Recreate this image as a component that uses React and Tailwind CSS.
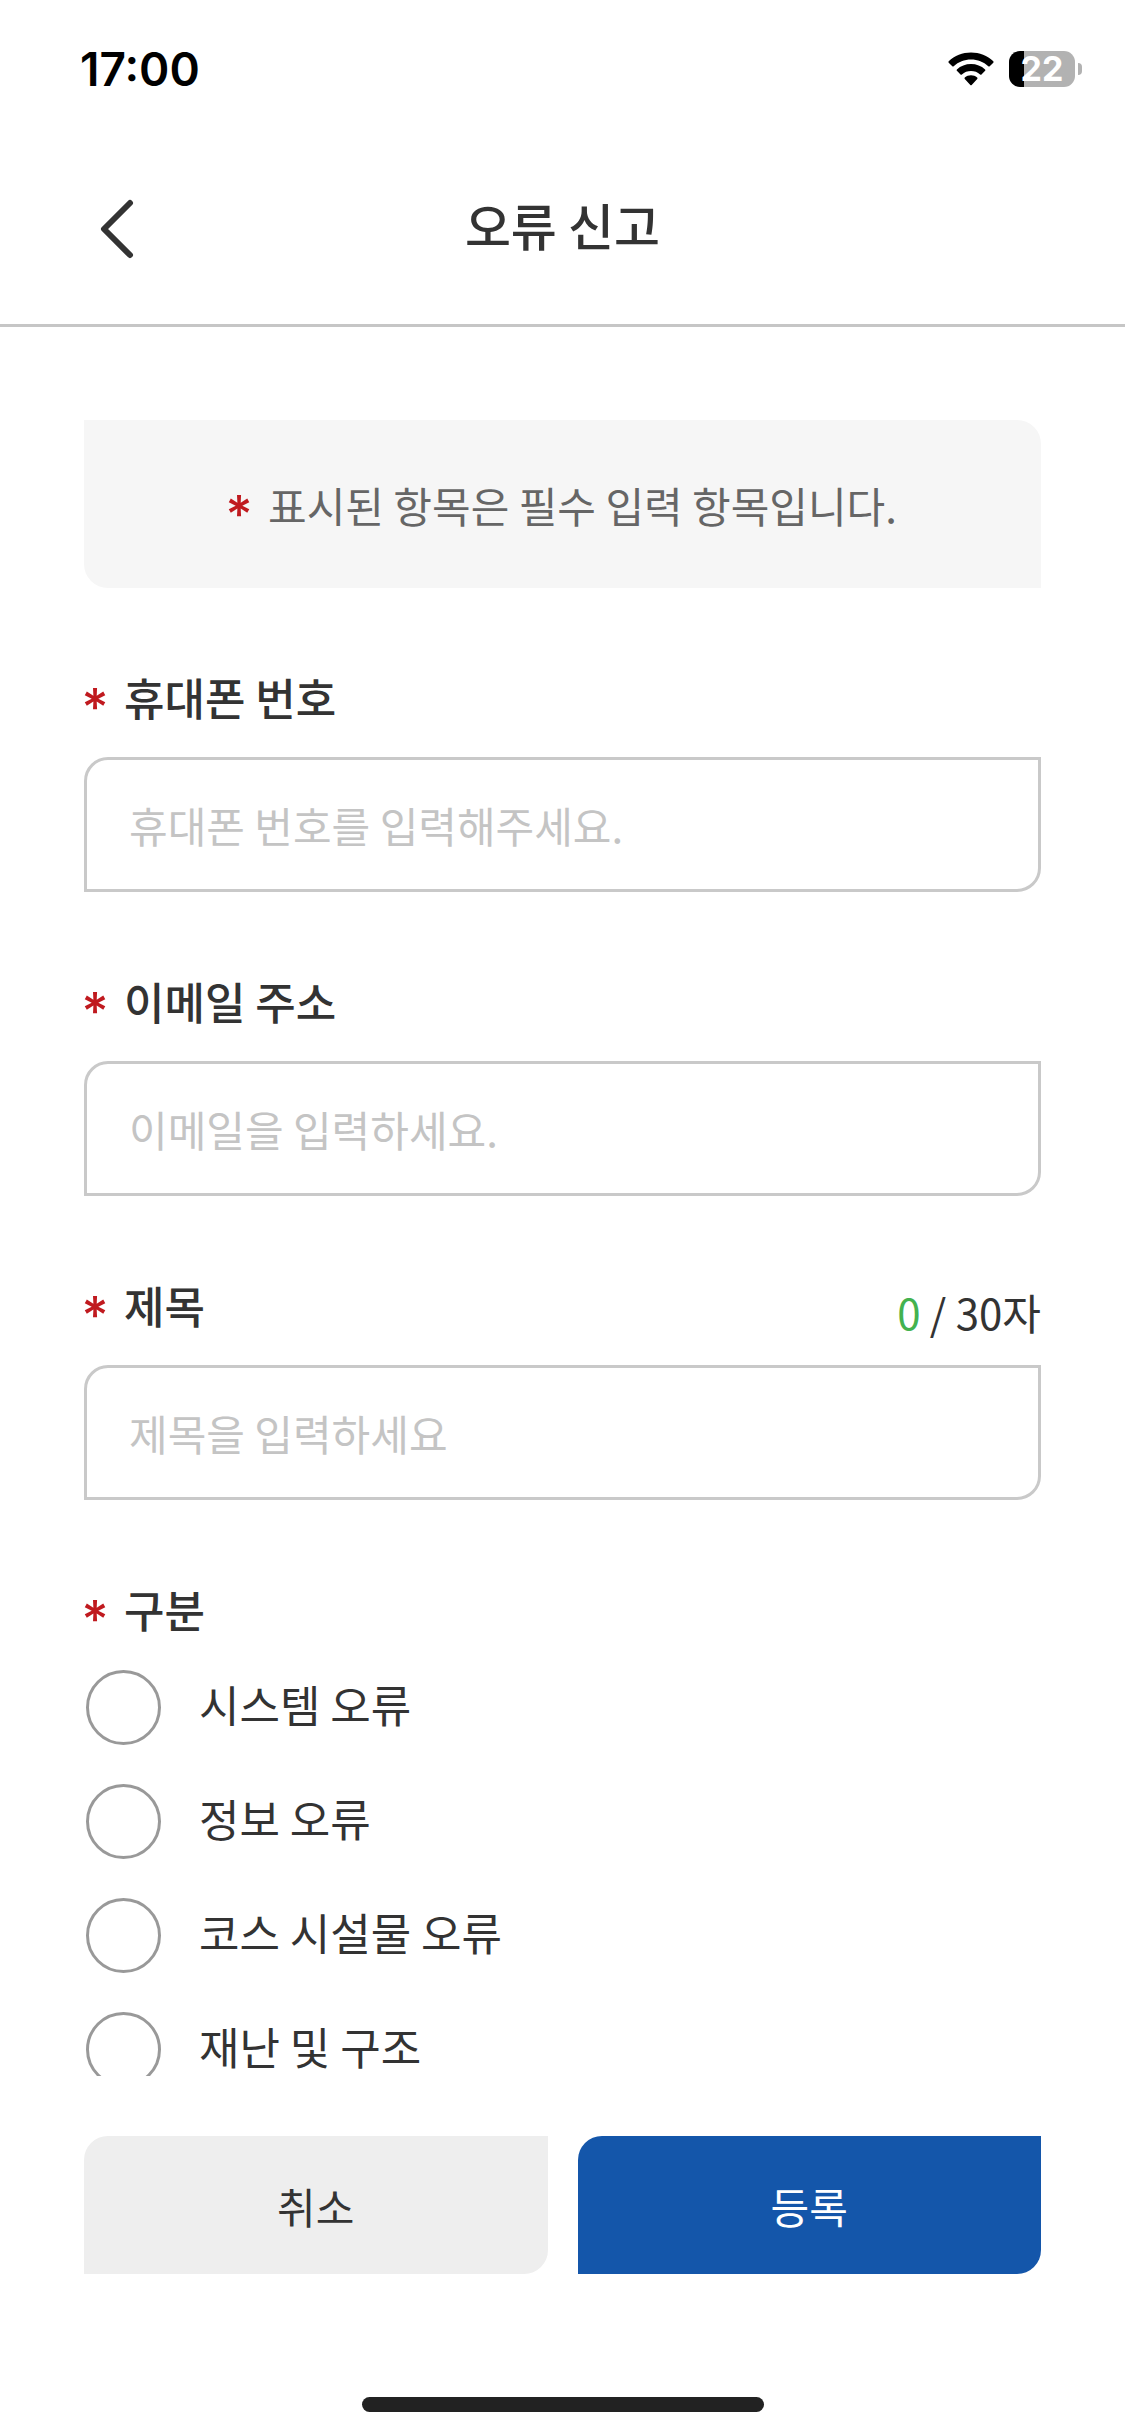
import React, { useState } from 'react'

const categories = [
  { id: 'system', label: '시스템 오류' },
  { id: 'info', label: '정보 오류' },
  { id: 'facility', label: '코스 시설물 오류' },
  { id: 'rescue', label: '재난 및 구조' },
]

const StatusBar = () => (
  <div className="flex items-center justify-between h-[138px] pl-[80px] pr-[43px] font-['Inter',sans-serif]">
    <span className="text-[46px] leading-none font-semibold text-black">17:00</span>
    <div className="flex items-center gap-[15px]">
      <svg width="46" height="34" viewBox="0 0 46 34" aria-hidden="true">
        <path d="M23 0.5C14.5 0.5 6.600 3.600 0.700 9.300Q0.100 10 0.700 10.700L4.300 14.300Q5 14.900 5.700 14.300C10.400 10 16.500 7.600 23 7.600S35.600 10 40.300 14.300Q41 14.900 41.700 14.300L45.300 10.700Q45.900 10 45.300 9.300C39.400 3.600 31.500 0.500 23 0.500Z" />
        <path d="M23 12C17.600 12 12.700 14 8.900 17.400Q8.200 18.100 8.900 18.800L12.500 22.400Q13.200 23 13.900 22.400C16.400 20.200 19.600 19 23 19S29.600 20.200 32.100 22.400Q32.800 23 33.500 22.400L37.100 18.800Q37.800 18.100 37.100 17.400C33.300 14 28.400 12 23 12Z" />
        <path d="M23 23.300C20.700 23.300 18.500 24.100 16.800 25.500Q16.100 26.200 16.800 26.900L22.300 32.900Q23 33.500 23.700 32.900L29.200 26.900Q29.900 26.200 29.200 25.500C27.500 24.100 25.300 23.300 23 23.300Z" />
      </svg>
      <div className="flex items-center gap-[3px]">
        <div className="flex items-center justify-center w-[66px] h-[36px] rounded-[11px] bg-linear-to-r from-black from-23% to-[#b2b2b2] to-23%">
          <span className="text-[34px] leading-none font-bold text-white">22</span>
        </div>
        <div className="w-[4px] h-[12px] rounded-r-full bg-[#b2b2b2]" />
      </div>
    </div>
  </div>
)

const Required = () => (
  <span className="flex justify-center w-[22px] h-[34px] shrink-0 text-[52px] leading-[56px] font-medium text-[#c01a1f] font-['Inter',sans-serif]">
    *
  </span>
)

const Field = ({ id, label, type = 'text', placeholder, value, onChange, maxLength }) => (
  <div className="flex flex-col gap-[32px]">
    <div className="flex items-end justify-between">
      <label htmlFor={id} className="flex items-center gap-[18px] text-[44px] leading-[56px] font-medium">
        <Required />
        {label}
      </label>
      {maxLength && (
        <p className="leading-[42px]">
          <span className="text-[#43b24f]">{value.length}</span> / {maxLength}자
        </p>
      )}
    </div>
    <input
      id={id}
      type={type}
      value={value}
      onChange={onChange}
      maxLength={maxLength}
      placeholder={placeholder}
      className="w-full h-[135px] px-[42px] border-3 border-[#c9c9c9] rounded-tl-3xl rounded-br-3xl bg-white outline-none placeholder:text-[#c4c4c4]"
    />
  </div>
)

const App = () => {
  const [phone, setPhone] = useState('')
  const [email, setEmail] = useState('')
  const [title, setTitle] = useState('')
  const [category, setCategory] = useState('')

  return (
    <div className="flex flex-col h-screen bg-white text-[42px] text-[#333] font-['Noto_Sans_CJK_KR',sans-serif]">
      <StatusBar />

      {/* header */}
      <header className="grid grid-cols-[90px_1fr_90px] items-center h-[189px] px-[72px] pb-[4px] border-b-3 border-[#c6c6c6]">
        <button type="button" aria-label="뒤로" className="flex items-center justify-center h-[90px]">
          <svg width="34" height="60" viewBox="0 0 34 60" fill="none" stroke="#333" strokeWidth="6" strokeLinecap="round" strokeLinejoin="round">
            <path d="M30 4L4 30L30 56" />
          </svg>
        </button>
        <h1 className="pb-[10px] text-center text-[50px] leading-[72px] font-medium">오류 신고</h1>
      </header>

      {/* scrollable form */}
      <form id="report" className="flex flex-col flex-1 min-h-0 gap-[81px] px-[84px] pt-[93px] overflow-y-auto [scrollbar-width:none]">
        <p className="flex items-center justify-center gap-[18px] h-[168px] shrink-0 rounded-tr-3xl rounded-bl-3xl bg-[#f6f6f6] text-[#666]">
          <Required />
          표시된 항목은 필수 입력 항목입니다.
        </p>

        <Field
          id="phone"
          label="휴대폰 번호"
          type="tel"
          placeholder="휴대폰 번호를 입력해주세요."
          value={phone}
          onChange={(e) => setPhone(e.target.value)}
        />
        <Field
          id="email"
          label="이메일 주소"
          type="email"
          placeholder="이메일을 입력하세요."
          value={email}
          onChange={(e) => setEmail(e.target.value)}
        />
        <Field
          id="title"
          label="제목"
          placeholder="제목을 입력하세요"
          value={title}
          onChange={(e) => setTitle(e.target.value)}
          maxLength={30}
        />

        <fieldset>
          <legend className="flex items-center gap-[18px] mb-[33px] text-[44px] leading-[56px] font-medium">
            <Required />
            구분
          </legend>
          <div className="flex flex-col gap-[39px]">
            {categories.map((item) => (
              <label key={item.id} className="flex items-center gap-[38px] h-[75px] pl-[2px] text-[44px] leading-[48px]">
                <input
                  type="radio"
                  name="category"
                  value={item.id}
                  checked={category === item.id}
                  onChange={() => setCategory(item.id)}
                  className="appearance-none size-[75px] shrink-0 rounded-full border-3 border-[#999] checked:border-[20px] checked:border-[#1456aa]"
                />
                <span className="pb-[8px]">{item.label}</span>
              </label>
            ))}
          </div>
        </fieldset>
      </form>

      {/* bottom actions */}
      <footer className="flex flex-col items-center px-[84px] pt-[60px] pb-[24px]">
        <div className="grid grid-cols-2 gap-[30px] w-full">
          <button type="button" className="h-[138px] rounded-tl-3xl rounded-br-3xl bg-[#eee]">
            취소
          </button>
          <button type="submit" form="report" className="h-[138px] rounded-tl-3xl rounded-br-3xl bg-[#1456aa] text-white">
            등록
          </button>
        </div>
        <div className="w-[402px] h-[15px] mt-[123px] rounded-full bg-[#222]" />
      </footer>
    </div>
  )
}

export default App
